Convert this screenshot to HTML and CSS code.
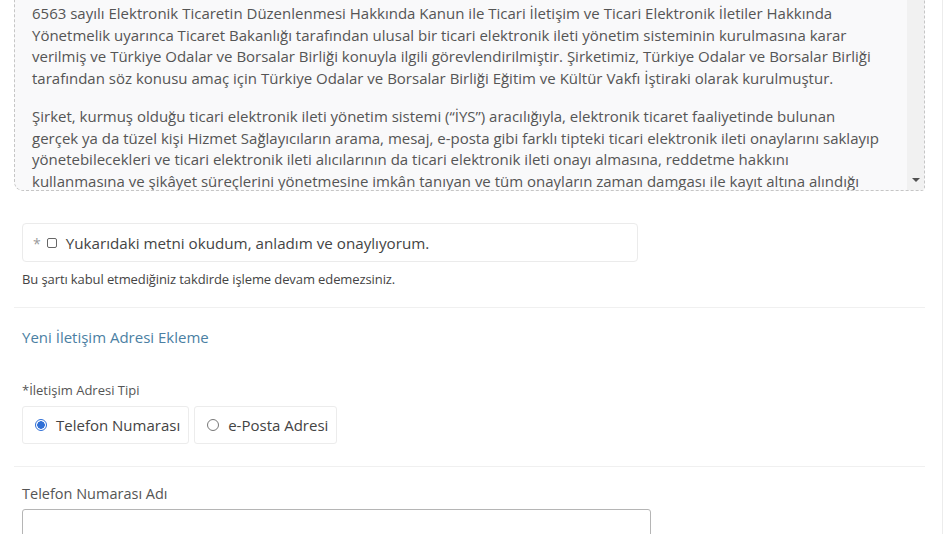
FILE: index.html
```html
<!DOCTYPE html>
<html lang="tr">
<head>
<meta charset="utf-8">
<title>İletişim Adresi</title>
<link rel="stylesheet" href="styles.css">
</head>
<body>
<div class="page">
  <div class="content">
    <div class="terms-box">
      <div class="terms-text">
        <p>6563 sayılı Elektronik Ticaretin Düzenlenmesi Hakkında Kanun ile Ticari İletişim ve Ticari Elektronik İletiler Hakkında<br>
        Yönetmelik uyarınca Ticaret Bakanlığı tarafından ulusal bir ticari elektronik ileti yönetim sisteminin kurulmasına karar<br>
        verilmiş ve Türkiye Odalar ve Borsalar Birliği konuyla ilgili görevlendirilmiştir. Şirketimiz, Türkiye Odalar ve Borsalar Birliği<br>
        tarafından söz konusu amaç için Türkiye Odalar ve Borsalar Birliği Eğitim ve Kültür Vakfı İştiraki olarak kurulmuştur.</p>
        <p>Şirket, kurmuş olduğu ticari elektronik ileti yönetim sistemi (“İYS”) aracılığıyla, elektronik ticaret faaliyetinde bulunan<br>
        gerçek ya da tüzel kişi Hizmet Sağlayıcıların arama, mesaj, e-posta gibi farklı tipteki ticari elektronik ileti onaylarını saklayıp<br>
        yönetebilecekleri ve ticari elektronik ileti alıcılarının da ticari elektronik ileti onayı almasına, reddetme hakkını<br>
        kullanmasına ve şikâyet süreçlerini yönetmesine imkân tanıyan ve tüm onayların zaman damgası ile kayıt altına alındığı</p>
      </div>
      <div class="scroll-col"><span class="scroll-arrow"></span></div>
    </div>

    <div class="form">
      <label class="consent">
        <span class="req">*</span>
        <span class="checkbox"></span>
        <span class="consent-text">Yukarıdaki metni okudum, anladım ve onaylıyorum.</span>
      </label>
      <p class="hint">Bu şartı kabul etmediğiniz takdirde işleme devam edemezsiniz.</p>
    </div>

    <div class="divider"></div>

    <div class="form">
      <h3 class="section-title">Yeni İletişim Adresi Ekleme</h3>
      <div class="field-label">*İletişim Adresi Tipi</div>
      <div class="radio-group">
        <label class="radio-option"><span class="radio checked"></span>Telefon Numarası</label>
        <label class="radio-option"><span class="radio"></span>e-Posta Adresi</label>
      </div>
    </div>

    <div class="divider second"></div>

    <div class="form">
      <div class="field-label name-label">Telefon Numarası Adı</div>
      <div class="text-input"></div>
    </div>
  </div>
</div>
</body>
</html>
```

FILE: styles.css
```css
* { box-sizing: border-box; }

html, body {
  margin: 0;
  padding: 0;
  background: #ffffff;
  overflow: hidden;
}

body {
  font-family: "Open Sans", "Noto Sans", sans-serif;
  color: #555;
  height: 534px;
}

.page {
  width: 943px;
  height: 534px;
  border-right: 1px solid #ececec;
  overflow: hidden;
}

.content {
  padding: 0 17px 0 14px;
}

.terms-box {
  margin-top: -8px;
  height: 199px;
  border: 1px dashed #c6c6c6;
  border-radius: 0 0 4px 9px;
  background: #f9f9fa;
  display: flex;
  overflow: hidden;
}

.terms-text {
  flex: 1;
  padding: 10px 0 0 17px;
  overflow: hidden;
  font-size: 15px;
  line-height: 21.5px;
  color: #555;
  white-space: nowrap;
}

.terms-text p {
  margin: 0 0 17px;
}

.scroll-col {
  width: 17px;
  background: #f1f1f1;
  display: flex;
  align-items: flex-end;
  justify-content: center;
  padding-bottom: 8px;
}

.scroll-arrow {
  width: 0;
  height: 0;
  border-left: 4px solid transparent;
  border-right: 4px solid transparent;
  border-top: 4px solid #505050;
}

.form {
  padding-left: 8px;
}

.consent {
  margin-top: 32px;
  width: 616px;
  height: 39px;
  border: 1px solid #ebebeb;
  border-radius: 4px;
  display: flex;
  align-items: center;
  padding-left: 10px;
  font-size: 15.2px;
  color: #444;
}

.req {
  color: #9a9a9a;
  font-size: 14px;
  margin-right: 6px;
  position: relative;
  top: 1px;
}

.checkbox {
  width: 10px;
  height: 10px;
  border: 1px solid #666;
  border-radius: 2px;
  margin-right: 9px;
  background: #fff;
}

.hint {
  margin: 8px 0 0;
  font-size: 13px;
  line-height: 18px;
  color: #444;
  letter-spacing: -0.1px;
}

.divider {
  margin-top: 19px;
  height: 1px;
  background: #f0f0f0;
}

.divider.second {
  margin-top: 22px;
}

.section-title {
  margin: 19px 0 0;
  font-size: 15px;
  line-height: 20px;
  font-weight: 400;
  color: #4b7fa3;
}

.field-label {
  margin-top: 33px;
  font-size: 13px;
  line-height: 20px;
  color: #555;
}

.radio-group {
  margin-top: 6px;
  display: flex;
  gap: 5px;
}

.radio-option {
  height: 38px;
  border: 1px solid #ececec;
  border-radius: 3px;
  display: flex;
  align-items: center;
  padding: 0 8px 0 12px;
  font-size: 15px;
  color: #444;
}

.radio {
  width: 12px;
  height: 12px;
  border: 1px solid #777;
  border-radius: 50%;
  margin-right: 9px;
  background: #fff;
}

.radio.checked {
  border-color: #2f6fd6;
  background: radial-gradient(circle, #2f6fd6 0 3.5px, #fff 4px);
}

.name-label {
  margin-top: 17px;
  font-size: 14.5px;
}

.text-input {
  margin-top: 5px;
  width: 629px;
  height: 38px;
  border: 1px solid #b5b5b5;
  border-radius: 3px;
  background: #fff;
}
```
